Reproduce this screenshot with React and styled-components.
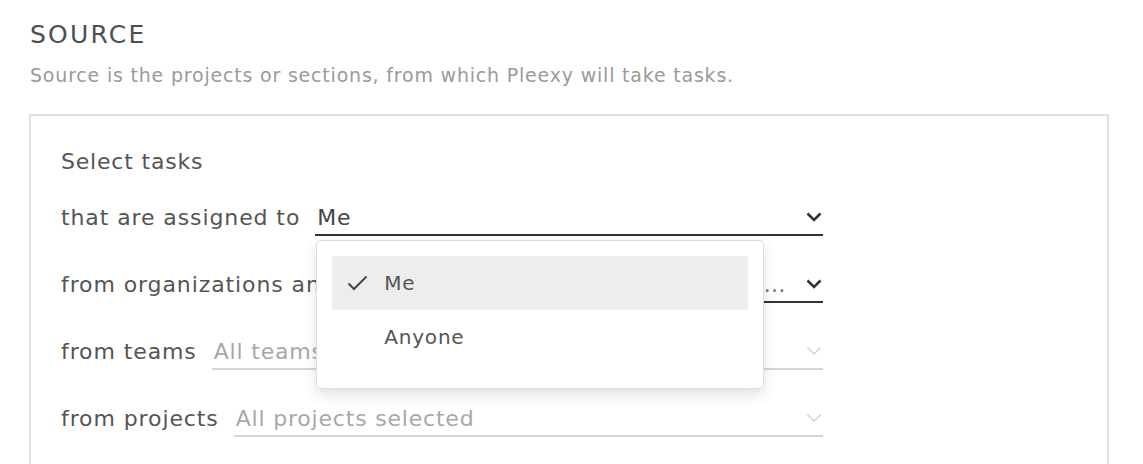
import React from "react";
import styled, { createGlobalStyle } from "styled-components";

const GlobalStyle = createGlobalStyle`
    body {
        margin: 0;
        background: #fff;
        font-family: "DejaVu Sans", Inter, sans-serif;
    }
`;

const Page = styled.div`
    padding: 20px 34px 0 29px;
    height: 464px;
    box-sizing: border-box;
    overflow: hidden;
`;

const Title = styled.h2`
    margin: 0 0 0 1px;
    font-size: 25px;
    font-weight: 400;
    line-height: 30px;
    color: #4b5050;
    letter-spacing: 2.2px;
`;

const Subtitle = styled.p`
    margin: 14px 0 0 1px;
    font-size: 19px;
    line-height: 22px;
    color: #9a9a9a;
    letter-spacing: 0.8px;
`;

const Box = styled.div`
    margin-top: 28px;
    border: 2px solid #e0e0e0;
    padding: 32px 30px;
    min-height: 400px;
`;

const Form = styled.div`
    width: 762px;
`;

const Heading = styled.div`
    font-size: 22px;
    line-height: 28px;
    color: #555;
    letter-spacing: 0.8px;
`;

const Row = styled.div`
    display: flex;
    align-items: flex-end;
    gap: 15px;
    margin-top: ${(p) => p.$top || 31}px;
`;

const Label = styled.span`
    flex: none;
    font-size: 22px;
    line-height: 36px;
    color: #555;
    letter-spacing: 0.9px;
    white-space: nowrap;
`;

const SelectWrap = styled.div`
    position: relative;
    flex: 1;
    min-width: 0;
`;

const Select = styled.div`
    display: flex;
    align-items: center;
    height: 34px;
    border-bottom: 2px solid ${(p) => (p.$muted ? "#d4d4d4" : "#333")};
`;

const Value = styled.span`
    flex: 1;
    min-width: 0;
    padding-left: 2px;
    font-size: 22px;
    letter-spacing: 0.8px;
    color: ${(p) => (p.$muted ? "#a8a8a8" : p.$dim ? "#777" : "#444")};
    white-space: nowrap;
    overflow: hidden;
    text-overflow: ellipsis;
`;

const Chevron = styled.svg`
    flex: none;
    width: 16px;
    height: 10px;
    margin: 0 1px 0 12px;
`;

const Menu = styled.div`
    position: absolute;
    top: calc(100% + 4px);
    left: 1px;
    width: 448px;
    box-sizing: border-box;
    padding: 15px 15px 24px;
    background: #fff;
    border: 1px solid #dcdcdc;
    border-radius: 5px;
    box-shadow: 0 6px 14px rgba(0, 0, 0, 0.12);
    z-index: 2;
`;

const Option = styled.div`
    display: flex;
    align-items: center;
    height: 54px;
    padding-left: 15px;
    background: ${(p) => (p.$active ? "#ededed" : "transparent")};
    font-size: 20px;
    color: #555;
    letter-spacing: 0.8px;
`;

const Check = styled.span`
    display: flex;
    width: 37px;
`;

const ChevronIcon = ({ muted }) => (
    <Chevron viewBox="0 0 16 10">
        <path
            d="M1.5 1.5l6.5 6.5 6.5-6.5"
            fill="none"
            stroke={muted ? "#d0d0d0" : "#333"}
            strokeWidth={muted ? 1.3 : 2.6}
        />
    </Chevron>
);

const CheckIcon = () => (
    <svg width="21" height="16" viewBox="0 0 21 16">
        <path d="M1.5 8.5l5.5 5.5 12.5-12.5" fill="none" stroke="#444" strokeWidth="2" />
    </svg>
);

const options = ["Me", "Anyone"];

const App = () => {
    return (
        <Page>
            <GlobalStyle />
            <Title>SOURCE</Title>
            <Subtitle>Source is the projects or sections, from which Pleexy will take tasks.</Subtitle>
            <Box>
                <Form>
                    <Heading>Select tasks</Heading>
                    <Row $top={24}>
                        <Label>that are assigned to</Label>
                        <SelectWrap>
                            <Select>
                                <Value>Me</Value>
                                <ChevronIcon />
                            </Select>
                            <Menu>
                                {options.map((o) => (
                                    <Option key={o} $active={o === "Me"}>
                                        <Check>{o === "Me" && <CheckIcon />}</Check>
                                        {o}
                                    </Option>
                                ))}
                            </Menu>
                        </SelectWrap>
                    </Row>
                    <Row>
                        <Label>from organizations and workspaces</Label>
                        <SelectWrap>
                            <Select>
                                <Value $dim>All organizations selected, personal projec</Value>
                                <ChevronIcon />
                            </Select>
                        </SelectWrap>
                    </Row>
                    <Row>
                        <Label>from teams</Label>
                        <SelectWrap>
                            <Select $muted>
                                <Value $muted>All teams selected</Value>
                                <ChevronIcon muted />
                            </Select>
                        </SelectWrap>
                    </Row>
                    <Row>
                        <Label>from projects</Label>
                        <SelectWrap>
                            <Select $muted>
                                <Value $muted>All projects selected</Value>
                                <ChevronIcon muted />
                            </Select>
                        </SelectWrap>
                    </Row>
                </Form>
            </Box>
        </Page>
    );
};

export default App;
